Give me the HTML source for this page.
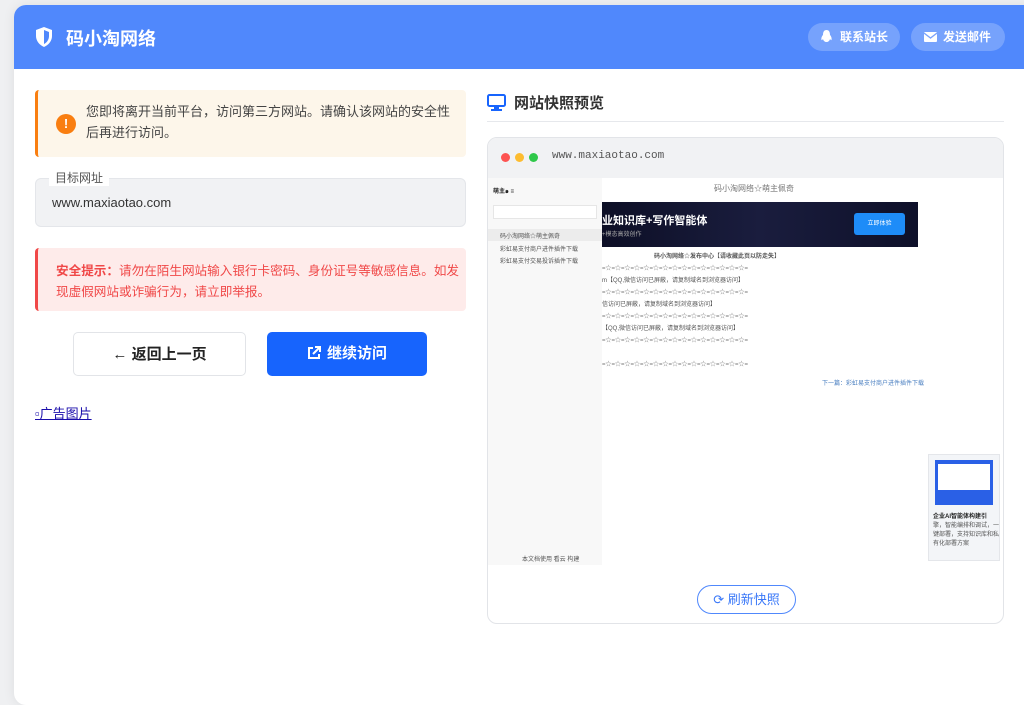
<!DOCTYPE html>
<html><head><meta charset="utf-8"><style>
*{box-sizing:border-box;margin:0;padding:0}
body{width:1024px;height:694px;overflow:hidden;background:#eff0f2;font-family:"Liberation Sans","Noto Sans CJK SC",sans-serif;position:relative}
.card{position:absolute;left:14px;top:5px;width:1030px;height:700px;background:#fff;border-radius:12px;overflow:hidden;box-shadow:0 0 12px rgba(0,0,0,.08)}
.hd{height:64px;background:#5088fc;position:relative;color:#fff}
.hd .t{position:absolute;left:52px;top:20px;font-size:18px;font-weight:bold}
.pill{position:absolute;top:18px;height:28px;border-radius:14px;background:rgba(255,255,255,.22);color:#fff;font-size:12px;font-weight:bold;line-height:28px;padding-left:32px}
.abs{position:absolute}
.warn{left:21px;top:85px;width:431px;height:67px;background:#fdf6ea;border-left:3px solid #f97e10;border-radius:4px}
.warn p{position:absolute;left:48px;top:11px;font-size:13px;line-height:21px;color:#444;width:370px}
.ex{position:absolute;left:18px;top:24px;width:20px;height:20px;border-radius:50%;background:#f97e10;color:#fff;font-size:13px;font-weight:bold;text-align:center;line-height:20px}
.url{left:21px;top:173px;width:431px;height:49px;background:#f1f2f4;border:1px solid #e4e6ea;border-radius:6px}
.sec{left:21px;top:243px;width:431px;height:63px;background:#feebea;border-left:3px solid #f04848;border-radius:4px;color:#f04848;font-size:12.6px;line-height:21px;padding:13px 0 0 18px;white-space:nowrap}
.btn{top:327px;height:44px;border-radius:5px;font-size:15px;font-weight:bold;text-align:center;line-height:44px}
.prev{left:473px;top:132px;width:517px;height:487px;border:1px solid #e2e4e8;border-radius:10px;overflow:hidden}
.tiny{font-size:6px;color:#555;position:absolute;white-space:nowrap}
</style></head><body>
<div class="card">
 <div class="hd">
  <svg class="abs" style="left:21px;top:22px" width="18" height="20" viewBox="0 0 18 20"><path d="M9 0L17 3v6c0 5-3.5 9-8 11C4.5 18 1 14 1 9V3z" fill="#fff"/><path d="M9 3v14c3-1.5 5-4.5 5-8V5z" fill="#5088fc"/></svg>
  <div class="t">码小淘网络</div>
  <div class="pill" style="left:794px;width:92px"><svg class="abs" style="left:13px;top:7px" width="11" height="14" viewBox="0 0 11 14"><path d="M5.5 0C8 0 9 2 9 5c1 1 2 3 1.5 5-.5.5-1-.5-1.5-1-.5 2-2 3-3.5 3S2.5 11 2 9c-.5.5-1 1.5-1.5 1C0 8 1 6 2 5c0-3 1-5 3.5-5z" fill="#fff"/></svg>联系站长</div>
  <div class="pill" style="left:897px;width:94px"><svg class="abs" style="left:13px;top:9px" width="13" height="10" viewBox="0 0 13 10"><rect width="13" height="10" rx="1" fill="#fff"/><path d="M0 1l6.5 5L13 1" stroke="#7aa3fd" stroke-width="1.3" fill="none"/></svg>发送邮件</div>
 </div>
 <div class="abs warn"><div class="ex">!</div><p>您即将离开当前平台，访问第三方网站。请确认该网站的安全性后再进行访问。</p></div>
 <div class="abs url"><div class="abs" style="left:16px;top:16px;font-size:13px;color:#333">www.maxiaotao.com</div></div>
 <div class="abs" style="left:35px;top:165px;background:#fff;padding:0 6px;font-size:12px;color:#555;line-height:16px">目标网址</div>
 <div class="abs sec"><b>安全提示：</b>请勿在陌生网站输入银行卡密码、身份证号等敏感信息。如发<br>现虚假网站或诈骗行为，请立即举报。</div>
 <div class="abs btn" style="left:59px;width:173px;border:1px solid #e2e4e8;color:#222;background:#fff">← 返回上一页</div>
 <div class="abs btn" style="left:253px;width:160px;background:#1764fd;color:#fff"><svg style="vertical-align:-2px;margin-right:6px" width="14" height="14" viewBox="0 0 14 14"><path d="M6 2H2v10h10V8" stroke="#fff" stroke-width="2" fill="none"/><path d="M8 1h5v5M13 1L6 8" stroke="#fff" stroke-width="2" fill="none"/></svg>继续访问</div>
 <div class="abs" style="left:21px;top:398px;font-size:13px;color:#1a0dab;text-decoration:underline">▫广告图片</div>

 <svg class="abs" style="left:473px;top:89px" width="19" height="17" viewBox="0 0 19 17"><rect x="1" y="1" width="17" height="11" rx="1.5" stroke="#1764fd" stroke-width="2" fill="none"/><rect x="7" y="13" width="5" height="2" fill="#1764fd"/><rect x="4" y="15" width="11" height="2" fill="#1764fd"/></svg>
 <div class="abs" style="left:500px;top:87px;font-size:15px;font-weight:bold;color:#333">网站快照预览</div>
 <div class="abs" style="left:473px;top:116px;width:517px;height:1px;background:#e6e8ec"></div>

 <div class="abs prev">
  <div style="height:40px;background:#f1f2f4;position:relative">
   <span class="abs" style="left:13px;top:15px;width:9px;height:9px;border-radius:50%;background:#fd5351"></span>
   <span class="abs" style="left:27px;top:15px;width:9px;height:9px;border-radius:50%;background:#fdbc30"></span>
   <span class="abs" style="left:41px;top:15px;width:9px;height:9px;border-radius:50%;background:#2fc84a"></span>
   <div class="abs" style="left:64px;top:12px;font-family:'Liberation Mono',monospace;font-size:11px;color:#555">www.maxiaotao.com</div>
  </div>
  <div class="abs" style="left:0;top:40px;width:114px;height:387px;background:#f8f8f8">
   <div class="tiny" style="left:5px;top:8px;font-weight:bold;color:#222">萌主๑ ≡</div>
   <div class="abs" style="left:5px;top:27px;width:104px;height:14px;background:#fff;border:1px solid #e6e6e6"></div>
   <div class="abs" style="left:0;top:51px;width:114px;height:12px;background:#ececec"></div>
   <div class="tiny" style="left:12px;top:53px">码小淘网络☆萌主佩奇</div>
   <div class="tiny" style="left:12px;top:66px">彩虹易支付商户进件插件下载</div>
   <div class="tiny" style="left:12px;top:78px">彩虹易支付交易投诉插件下载</div>
   <div class="tiny" style="left:34px;top:376px">本文档使用 看云 构建</div>
  </div>
  <div class="tiny" style="left:226px;top:45px;font-size:8px;color:#777">码小淘网络☆萌主佩奇</div>
  <div class="abs" style="left:114px;top:64px;width:316px;height:45px;background:linear-gradient(90deg,#0d0f26,#1a1d3e 50%,#0e1029)">
   <div class="abs" style="left:0;top:10px;color:#fff;font-size:11px;font-weight:bold">业知识库+写作智能体</div>
   <div class="abs" style="left:0;top:27px;color:#aaa;font-size:6px">+模态高效创作</div>
   <div class="abs" style="left:252px;top:11px;width:51px;height:22px;border-radius:3px;background:#1e8cf8;color:#fff;font-size:6px;text-align:center;line-height:22px">立即体验</div>
  </div>
  <div class="tiny" style="left:166px;top:113px;font-weight:bold">码小淘网络☆发布中心【请收藏此页以防走失】</div>
  <div class="tiny" style="left:114px;top:125px;color:#777">=☆=☆=☆=☆=☆=☆=☆=☆=☆=☆=☆=☆=☆=☆=☆=</div>
  <div class="tiny" style="left:114px;top:137px">m【QQ,微信访问已屏蔽，请复制域名到浏览器访问】</div>
  <div class="tiny" style="left:114px;top:149px;color:#777">=☆=☆=☆=☆=☆=☆=☆=☆=☆=☆=☆=☆=☆=☆=☆=</div>
  <div class="tiny" style="left:114px;top:161px">信访问已屏蔽，请复制域名到浏览器访问】</div>
  <div class="tiny" style="left:114px;top:173px;color:#777">=☆=☆=☆=☆=☆=☆=☆=☆=☆=☆=☆=☆=☆=☆=☆=</div>
  <div class="tiny" style="left:114px;top:185px">【QQ,微信访问已屏蔽，请复制域名到浏览器访问】</div>
  <div class="tiny" style="left:114px;top:197px;color:#777">=☆=☆=☆=☆=☆=☆=☆=☆=☆=☆=☆=☆=☆=☆=☆=</div>
  <div class="tiny" style="left:114px;top:221px;color:#777">=☆=☆=☆=☆=☆=☆=☆=☆=☆=☆=☆=☆=☆=☆=☆=</div>
  <div class="tiny" style="left:334px;top:240px;color:#4a7fc1">下一篇：彩虹易支付商户进件插件下载</div>
  <div class="abs" style="left:440px;top:316px;width:72px;height:107px;background:#f3f5f8;border:1px solid #e4e6ea">
   <div class="abs" style="left:6px;top:5px;width:58px;height:45px;background:#2a60e6"><div class="abs" style="left:3px;top:4px;width:52px;height:26px;background:#fff"></div></div>
   <div class="tiny" style="left:4px;top:56px;font-weight:bold;color:#222">企业AI智能体构建引</div>
   <div class="tiny" style="left:4px;top:65px">擎，智能编排和调试，一</div>
   <div class="tiny" style="left:4px;top:74px">键部署，支持知识库和私</div>
   <div class="tiny" style="left:4px;top:83px">有化部署方案</div>
  </div>
  <div class="abs" style="left:209px;top:447px;width:99px;height:29px;border:1px solid #5088fc;border-radius:15px;color:#3a78f8;font-size:13px;text-align:center;line-height:27px">⟳ 刷新快照</div>
 </div>
</div>
</body></html>
